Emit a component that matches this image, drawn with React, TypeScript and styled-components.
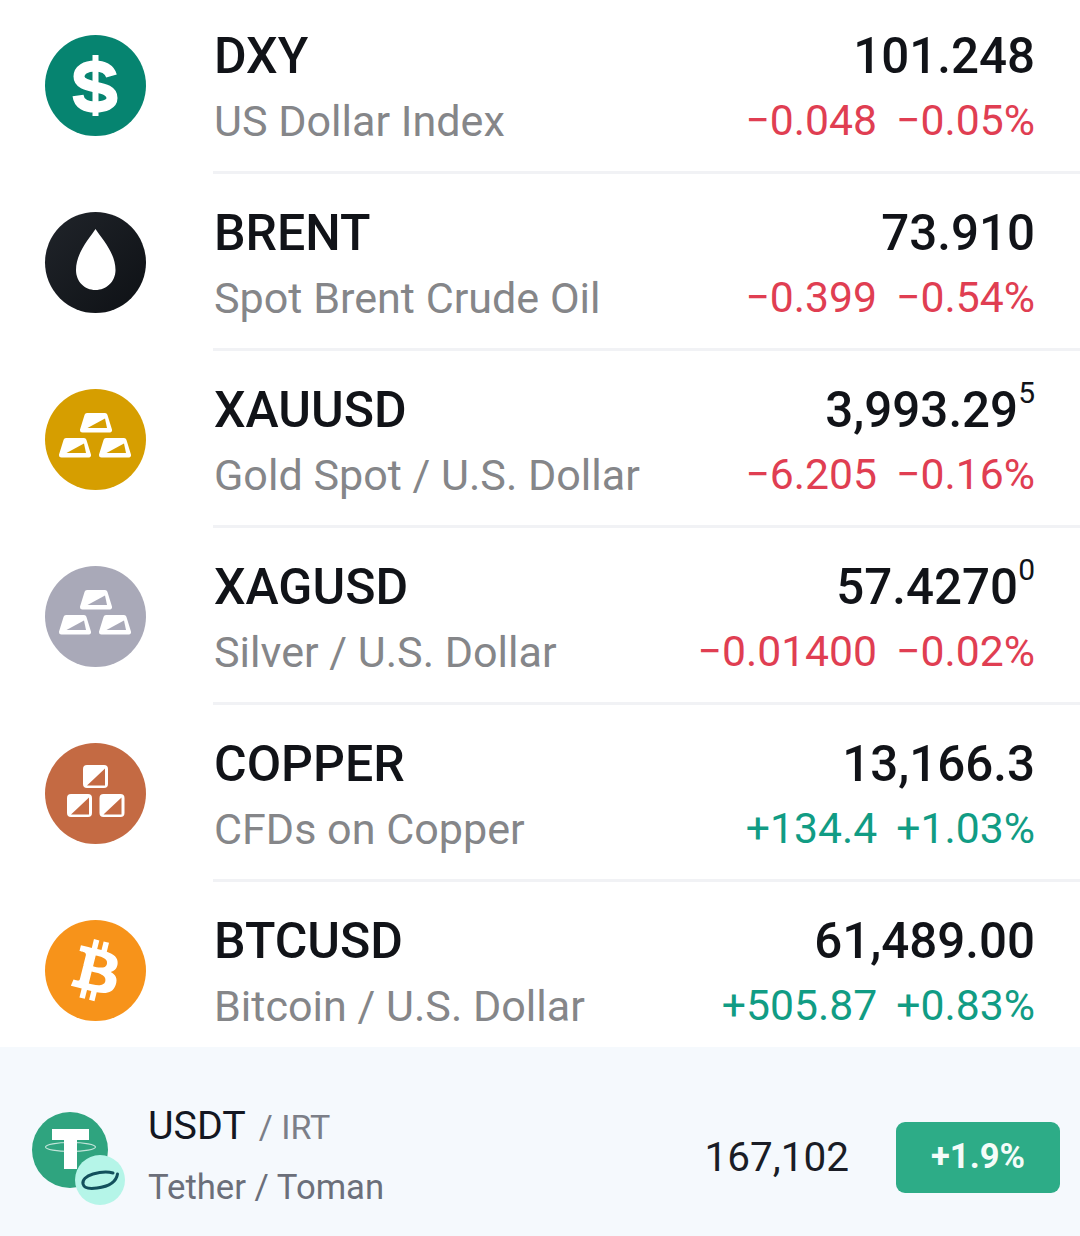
import React from 'react';
import styled, { createGlobalStyle } from 'styled-components';

const GlobalStyle = createGlobalStyle`
    html, body {
        margin: 0;
        padding: 0;
        background: #fff;
        font-family: Roboto, "Liberation Sans", sans-serif;
    }
`;

const Page = styled.div`
    width: 1080px;
    height: 1236px;
    overflow: hidden;
    display: flex;
    flex-direction: column;
`;

const List = styled.div`
    height: 1047px;
    overflow: hidden;
    flex-shrink: 0;
`;

const Row = styled.div`
    display: flex;
    height: 177px;
    box-sizing: border-box;

    &:first-child {
        margin-top: -3px;
    }
`;

const Logo = styled.div<{ $bg: string }>`
    width: 101px;
    height: 101px;
    margin: 38px 67px 0 45px;
    flex-shrink: 0;
    border-radius: 50%;
    background: ${(p) => p.$bg};
    display: flex;
    align-items: center;
    justify-content: center;
    color: #fff;
`;

const Body = styled.div`
    flex: 1;
    display: flex;
    justify-content: space-between;
    box-sizing: border-box;
    padding: 31px 45px 0 1px;
    border-bottom: 3px solid #f1f2f5;
`;

const Names = styled.div`
    display: flex;
    flex-direction: column;
    gap: 10px;
`;

const Symbol = styled.div`
    font-size: 50px;
    line-height: 56px;
    font-weight: 500;
    color: #111318;
`;

const Description = styled.div`
    font-size: 43.1px;
    line-height: 56px;
    color: #858689;
`;

const Quote = styled.div`
    display: flex;
    flex-direction: column;
    align-items: flex-end;
    gap: 8px;
`;

const Price = styled.div`
    font-size: 49.3px;
    line-height: 56px;
    font-weight: 500;
    color: #111318;
    display: flex;
`;

const Pip = styled.span`
    font-size: 30px;
    line-height: 30px;
    font-weight: 400;
    margin-top: -4px;
`;

const Change = styled.div<{ $up: boolean }>`
    font-size: 42.7px;
    line-height: 56px;
    color: ${(p) => (p.$up ? '#119c84' : '#e03e52')};
    display: flex;
    gap: 19px;
`;

const Footer = styled.div`
    flex: 1;
    display: flex;
    align-items: center;
    background: #f5f9fd;
    padding: 34px 20px 0 32px;
`;

const TokenLogo = styled.div`
    position: relative;
    width: 76px;
    height: 76px;
    margin: -17px 40px 0 0;
    border-radius: 50%;
    background: #2fa47f;
    display: flex;
    align-items: center;
    justify-content: center;
    flex-shrink: 0;
`;

const TokenBadge = styled.div`
    position: absolute;
    right: -17px;
    bottom: -17px;
    width: 50px;
    height: 50px;
    border-radius: 50%;
    background: #b5f5e8;
    display: flex;
    align-items: center;
    justify-content: center;
`;

const TokenNames = styled.div`
    flex: 1;
    display: flex;
    flex-direction: column;
    gap: 17px;
    margin-top: -7px;
`;

const TokenPair = styled.div`
    font-size: 39.4px;
    line-height: 46px;
    color: #131722;
    display: flex;
    align-items: baseline;
`;

const TokenQuote = styled.span`
    font-size: 34px;
    color: #7c7f88;
    margin-left: 13px;
`;

const TokenName = styled.div`
    font-size: 34.7px;
    line-height: 40px;
    color: #6b6f7a;
`;

const TokenPrice = styled.div`
    font-size: 40.5px;
    color: #1a1d26;
    margin: -4px 47px 0 0;
`;

const PercentBadge = styled.div`
    width: 164px;
    height: 71px;
    margin-top: -2px;
    padding-bottom: 3px;
    box-sizing: border-box;
    border-radius: 9px;
    background: #2dac87;
    color: #f4fcf9;
    font-size: 34.5px;
    font-weight: 700;
    display: flex;
    align-items: center;
    justify-content: center;
`;

type Spot = { x: number; y: number; cut: string };

const Dollar = () => (
    <svg width="101" height="101" viewBox="0 0 101 101">
        <path d="M47.5 20H53.5V81H47.5Z" fill="#fff" />
        <path
            d="M66.5 41C64.5 34 58 31 50 31C40.5 31 34 35 34 41.5C34 48 41 50 50 52C60 54 67 56 67 63C67 69 60 72 50 72C41 72 34 69 33 60.5"
            fill="none"
            stroke="#fff"
            strokeWidth="11"
        />
    </svg>
);

// one ingot, white with a triangle of the circle colour cut in the lower right
const Ingot = ({ x, y, cut }: Spot) => (
    <g transform={`translate(${x} ${y})`}>
        <path d="M7 2.500H25L29.500 17H2.500Z" fill="#fff" stroke="#fff" strokeWidth="5" strokeLinejoin="round" />
        <path d="M7.500 15L25 5.500L27 15Z" fill={cut} />
    </g>
);

const Bars = ({ cut }: { cut: string }) => (
    <svg width="101" height="101" viewBox="0 0 101 101">
        <Ingot x={35} y={24} cut={cut} />
        <Ingot x={14} y={49} cut={cut} />
        <Ingot x={54} y={49} cut={cut} />
    </svg>
);

const Cube = ({ x, y, cut }: Spot) => (
    <g transform={`translate(${x} ${y})`}>
        <rect x="1.500" y="1.500" width="22" height="20" rx="2.500" fill="#fff" stroke="#fff" strokeWidth="3" />
        <path d="M4 20.500L22 3.500V20.500Z" fill={cut} />
    </g>
);

const Cubes = ({ cut }: { cut: string }) => (
    <svg width="101" height="101" viewBox="0 0 101 101">
        <Cube x={38} y={22} cut={cut} />
        <Cube x={22} y={51} cut={cut} />
        <Cube x={54.5} y={51} cut={cut} />
    </svg>
);

const Drop = () => (
    <svg width="101" height="101" viewBox="0 0 101 101">
        <path
            d="M50.5 17C44 27 31 41 31 58C31 69.5 39.5 78 50.5 78C61.5 78 70.5 69.5 70.5 58C70.5 41 57 27 50.5 17Z"
            fill="#fff"
        />
    </svg>
);

const Bitcoin = () => (
    <svg width="98" height="98" viewBox="0 0 64 64">
        <path
            d="M46.1 27.441c.64-4.258-2.606-6.547-7.039-8.074l1.438-5.768-3.512-.875-1.4 5.616c-.922-.23-1.87-.447-2.812-.662l1.41-5.653-3.509-.875-1.439 5.766c-.764-.174-1.514-.346-2.242-.527l.004-.018-4.842-1.209-.934 3.75s2.605.597 2.55.634c1.422.355 1.68 1.296 1.636 2.042l-1.638 6.571c.098.025.225.061.365.117l-.37-.092-2.297 9.205c-.174.432-.615 1.08-1.609.834.035.051-2.552-.637-2.552-.637l-1.743 4.02 4.57 1.139c.85.213 1.683.436 2.502.646l-1.453 5.835 3.507.875 1.44-5.772c.957.26 1.887.5 2.797.726l-1.434 5.745 3.511.875 1.453-5.823c5.987 1.133 10.49.676 12.384-4.739 1.527-4.36-.076-6.875-3.226-8.515 2.294-.529 4.022-2.038 4.483-5.155zm-8.022 11.249c-1.085 4.36-8.426 2.003-10.806 1.412l1.928-7.729c2.38.594 10.012 1.77 8.878 6.317zm1.086-11.312c-.99 3.966-7.1 1.951-9.082 1.457l1.748-7.01c1.982.494 8.365 1.416 7.334 5.553z"
            fill="#fff"
        />
    </svg>
);

const Tether = () => (
    <svg width="76" height="76" viewBox="0 0 76 76">
        <path d="M20 17H57V28H45V57H32V28H20Z" fill="#fff" />
        <ellipse cx="38.500" cy="35" rx="25" ry="4.500" fill="none" stroke="#fff" strokeWidth="1.200" opacity=".7" />
    </svg>
);

const Loop = () => (
    <svg width="40" height="26" viewBox="0 0 40 26">
        <path
            d="M33 6C28 4.500 20 5 13 7C6 9 2 13 3 17C4 21 10 22 17 21C25 20 36 17 37.500 7"
            fill="none"
            stroke="#13505c"
            strokeWidth="3"
            strokeLinecap="round"
        />
    </svg>
);

const GOLD = '#d69e00';
const SILVER = '#a9a9b8';
const COPPER = '#c46a43';

const ROWS = [
    { symbol: 'DXY', name: 'US Dollar Index', price: '101.248', change: '−0.048', percent: '−0.05%', bg: '#068470', icon: <Dollar /> },
    { symbol: 'BRENT', name: 'Spot Brent Crude Oil', price: '73.910', change: '−0.399', percent: '−0.54%', bg: 'linear-gradient(135deg, #20242a, #0e1115)', icon: <Drop /> },
    { symbol: 'XAUUSD', name: 'Gold Spot / U.S. Dollar', price: '3,993.29', pip: '5', change: '−6.205', percent: '−0.16%', bg: GOLD, icon: <Bars cut={GOLD} /> },
    { symbol: 'XAGUSD', name: 'Silver / U.S. Dollar', price: '57.4270', pip: '0', change: '−0.01400', percent: '−0.02%', bg: SILVER, icon: <Bars cut={SILVER} /> },
    { symbol: 'COPPER', name: 'CFDs on Copper', price: '13,166.3', change: '+134.4', percent: '+1.03%', up: true, bg: COPPER, icon: <Cubes cut={COPPER} /> },
    { symbol: 'BTCUSD', name: 'Bitcoin / U.S. Dollar', price: '61,489.00', change: '+505.87', percent: '+0.83%', up: true, bg: '#f7931a', icon: <Bitcoin /> },
];

const App = () => {
    return (
        <>
            <GlobalStyle />
            <Page>
                <List>
                    {ROWS.map((row) => (
                        <Row key={row.symbol}>
                            <Logo $bg={row.bg}>{row.icon}</Logo>
                            <Body>
                                <Names>
                                    <Symbol>{row.symbol}</Symbol>
                                    <Description>{row.name}</Description>
                                </Names>
                                <Quote>
                                    <Price>
                                        {row.price}
                                        {row.pip && <Pip>{row.pip}</Pip>}
                                    </Price>
                                    <Change $up={!!row.up}>
                                        <span>{row.change}</span>
                                        <span>{row.percent}</span>
                                    </Change>
                                </Quote>
                            </Body>
                        </Row>
                    ))}
                </List>
                <Footer>
                    <TokenLogo>
                        <Tether />
                        <TokenBadge>
                            <Loop />
                        </TokenBadge>
                    </TokenLogo>
                    <TokenNames>
                        <TokenPair>
                            USDT<TokenQuote>/ IRT</TokenQuote>
                        </TokenPair>
                        <TokenName>Tether / Toman</TokenName>
                    </TokenNames>
                    <TokenPrice>167,102</TokenPrice>
                    <PercentBadge>+1.9%</PercentBadge>
                </Footer>
            </Page>
        </>
    );
};

export default App;
